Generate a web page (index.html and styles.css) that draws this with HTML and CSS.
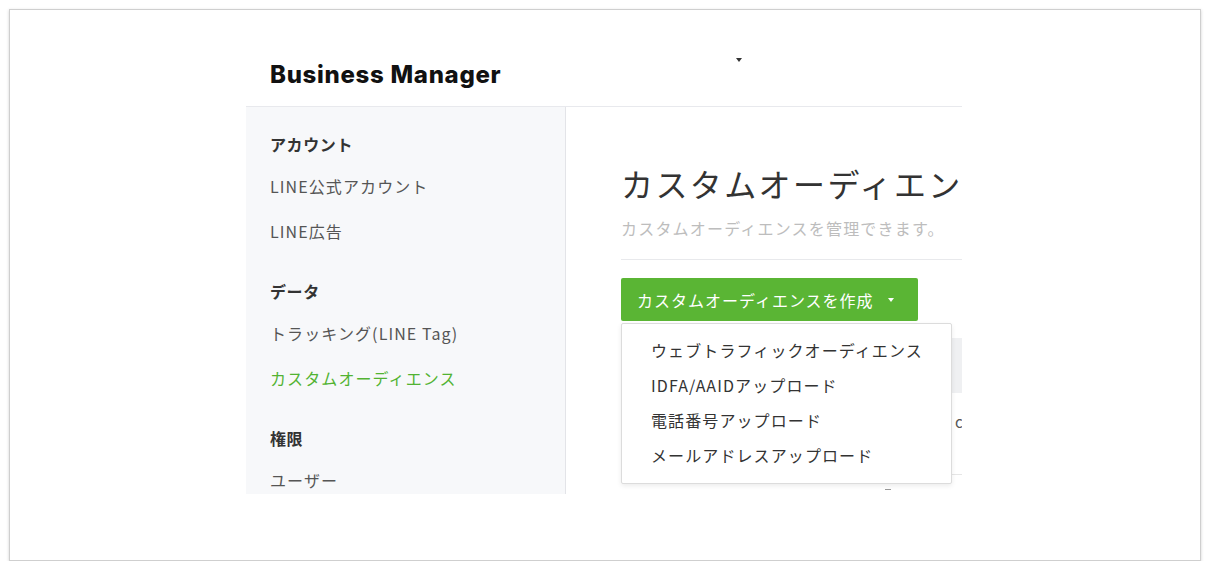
FILE: index.html
```html
<!DOCTYPE html>
<html lang="ja">
<head>
  <meta charset="UTF-8" />
  <title>Business Manager - カスタムオーディエンス</title>
  <meta name="viewport" content="width=device-width, initial-scale=1.0" />
  <link rel="stylesheet" href="styles.css">
</head>
<body>

  <div class="frame">
    <div class="app">

      <!-- Header -->
      <div class="app-header">
        <div class="logo">Business Manager</div>
        <span class="account-caret"></span>
      </div>

      <div class="app-body">
        <!-- Sidebar -->
        <div class="sidebar">
          <div class="nav-group">
            <div class="nav-title">アカウント</div>
            <div class="nav-item">LINE公式アカウント</div>
            <div class="nav-item">LINE広告</div>
          </div>
          <div class="nav-group">
            <div class="nav-title">データ</div>
            <div class="nav-item">トラッキング(LINE Tag)</div>
            <div class="nav-item active">カスタムオーディエンス</div>
          </div>
          <div class="nav-group">
            <div class="nav-title">権限</div>
            <div class="nav-item">ユーザー</div>
          </div>
        </div>

        <!-- Main -->
        <div class="main">
          <div class="content">
            <h1 class="page-title">カスタムオーディエンス</h1>
            <p class="page-desc">カスタムオーディエンスを管理できます。</p>

            <div class="toolbar">
              <button class="btn-create">カスタムオーディエンスを作成<span class="btn-caret"></span></button>
              <div class="dropdown">
                <div class="dropdown-item">ウェブトラフィックオーディエンス</div>
                <div class="dropdown-item">IDFA/AAIDアップロード</div>
                <div class="dropdown-item">電話番号アップロード</div>
                <div class="dropdown-item">メールアドレスアップロード</div>
              </div>
            </div>

            <div class="table">
              <div class="table-head"></div>
              <div class="table-row">
                <span class="cell-name"></span>
                <span class="cell-status">c</span>
              </div>
            </div>
            <div class="pager"></div>
          </div>
        </div>
      </div>

    </div>
  </div>

</body>
</html>
```

FILE: styles.css
```css
body {
  margin: 0;
  background-color: white;
  font-family: "Noto Sans CJK JP", "Noto Sans", sans-serif;
  color: #333;
}

.frame {
  margin: 9px 0 0 9px;
  width: 1192px;
  height: 552px;
  border: 1px solid #cfcfcf;
  box-shadow: 0 1px 3px rgba(0, 0, 0, 0.18);
  background-color: white;
  padding: 31px 0 0 236px;
  box-sizing: border-box;
}

.app {
  width: 716px;
  height: 453px;
  overflow: hidden;
  display: flex;
  flex-direction: column;
}

/* Header */
.app-header {
  height: 66px;
  flex-shrink: 0;
  border-bottom: 1px solid #e8e9ed;
  display: flex;
  align-items: center;
  padding-left: 24px;
  box-sizing: border-box;
}

.logo {
  font-family: Inter, "Liberation Sans", sans-serif;
  font-weight: 800;
  font-size: 24px;
  letter-spacing: 0.7px;
  color: #111;
  margin-top: 2px;
}

.account-caret {
  align-self: flex-start;
  margin: 17px 0 0 235px;
  width: 0;
  height: 0;
  border-left: 3px solid transparent;
  border-right: 3px solid transparent;
  border-top: 4px solid #333;
}

.app-body {
  flex: 1;
  display: flex;
  min-height: 0;
}

/* Sidebar */
.sidebar {
  width: 320px;
  flex-shrink: 0;
  background-color: #f7f8fa;
  border-right: 1px solid #e3e4e8;
  box-sizing: border-box;
  padding-left: 24px;
}

.nav-group {
  margin-top: 17px;
}

.nav-title {
  height: 40px;
  line-height: 40px;
  font-size: 16px;
  font-weight: bold;
  color: #333;
  letter-spacing: 0.6px;
}

.nav-item {
  height: 45px;
  line-height: 45px;
  font-size: 16px;
  color: #555;
  letter-spacing: 1.1px;
}

.nav-item.active {
  color: #52b332;
}

/* Main */
.main {
  flex: 1;
  overflow: hidden;
  padding-left: 55px;
}

.content {
  width: 620px;
  position: relative;
}

.page-title {
  margin: 54px 0 0;
  font-size: 32px;
  font-weight: normal;
  line-height: 44px;
  letter-spacing: 2.4px;
  color: #333;
  white-space: nowrap;
}

.page-desc {
  margin: 11px 0 0;
  font-size: 16px;
  line-height: 24px;
  letter-spacing: 1.2px;
  color: #bdbdbd;
  padding-bottom: 19px;
  border-bottom: 1px solid #e8e9ec;
}

.toolbar {
  position: relative;
  margin-top: 18px;
}

.btn-create {
  display: flex;
  align-items: center;
  height: 43px;
  padding: 0 24px 0 16px;
  border: none;
  border-radius: 2px;
  background-color: #5ab534;
  color: white;
  font-family: inherit;
  font-size: 16px;
  letter-spacing: 1px;
  cursor: pointer;
}

.btn-caret {
  margin-left: 14px;
  width: 0;
  height: 0;
  border-left: 3px solid transparent;
  border-right: 3px solid transparent;
  border-top: 4px solid white;
}

.dropdown {
  position: absolute;
  top: 45px;
  left: 0;
  width: 331px;
  padding: 9px 0 10px;
  background-color: white;
  border: 1px solid #dcdcdc;
  border-radius: 2px;
  box-shadow: 0 2px 5px rgba(0, 0, 0, 0.08);
  box-sizing: border-box;
  z-index: 10;
}

.dropdown-item {
  height: 35px;
  line-height: 35px;
  padding-left: 29px;
  font-size: 16px;
  letter-spacing: 1.1px;
  color: #333;
}

/* Table behind the menu */
.table {
  margin-top: 17px;
}

.table-head {
  height: 55px;
  background-color: #eff0f2;
}

.table-row {
  height: 81px;
  display: flex;
  align-items: flex-start;
  border-bottom: 1px solid #e6e6e6;
}

.cell-name {
  width: 334px;
}

.cell-status {
  font-size: 15px;
  line-height: 20px;
  color: #555;
  margin-top: 19px;
}

.pager {
  margin: 14px 0 0 264px;
  width: 6px;
  height: 1px;
  background-color: #999;
}
```
